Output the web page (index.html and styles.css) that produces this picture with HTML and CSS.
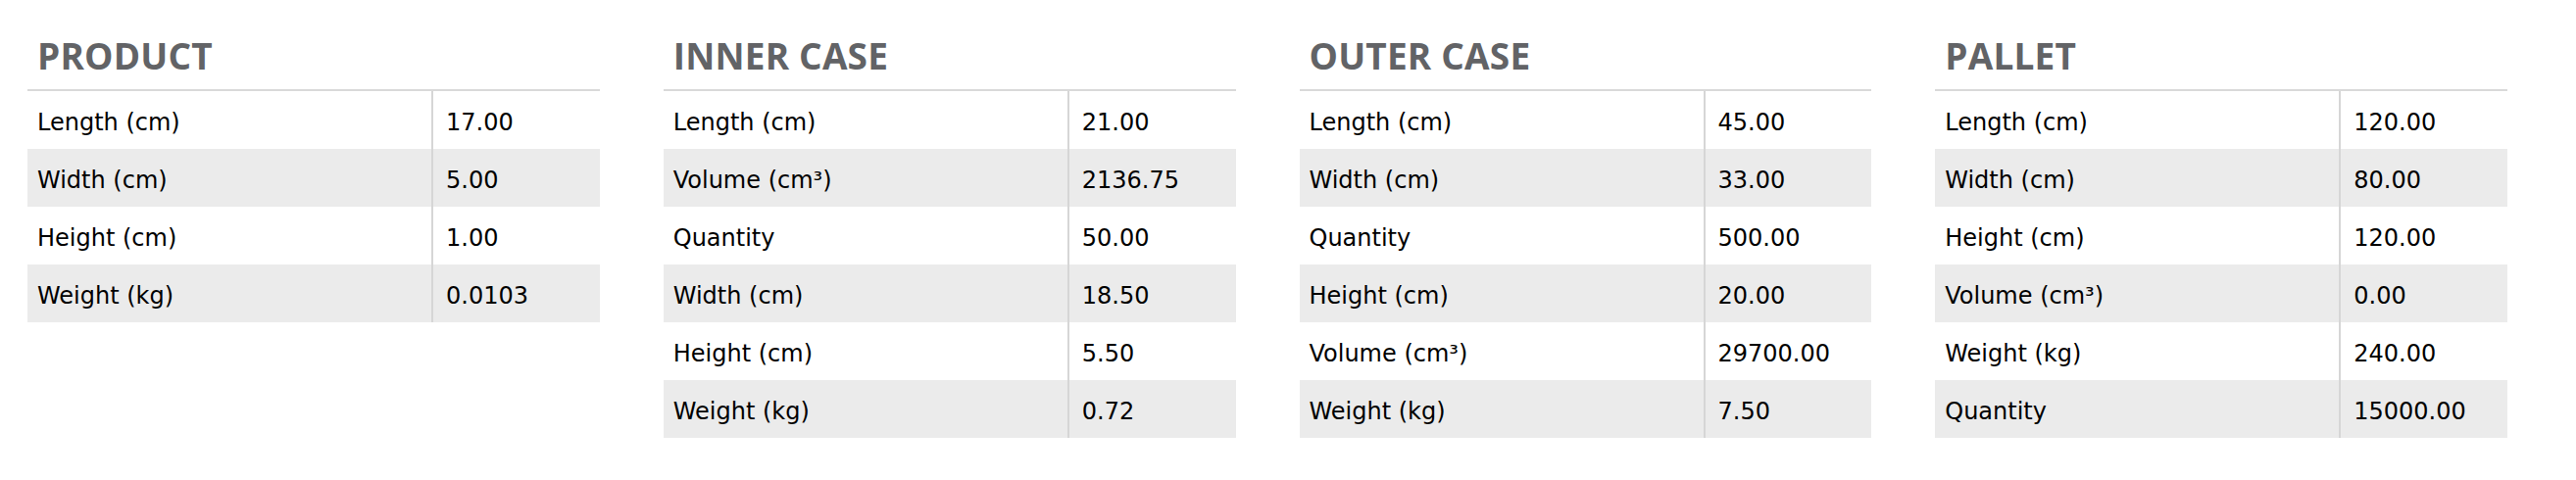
FILE: index.html
```html
<!DOCTYPE html>
<html lang="en">
<head>
<meta charset="utf-8">
<title>Packaging dimensions</title>
<link rel="stylesheet" href="styles.css">
</head>
<body>
<div class="specs">
  <section class="block">
    <h2 class="block-title">PRODUCT</h2>
    <table class="spec-table">
      <tr><td class="label">Length (cm)</td><td class="value">17.00</td></tr>
      <tr><td class="label">Width (cm)</td><td class="value">5.00</td></tr>
      <tr><td class="label">Height (cm)</td><td class="value">1.00</td></tr>
      <tr><td class="label">Weight (kg)</td><td class="value">0.0103</td></tr>
    </table>
  </section>
  <section class="block">
    <h2 class="block-title">INNER CASE</h2>
    <table class="spec-table">
      <tr><td class="label">Length (cm)</td><td class="value">21.00</td></tr>
      <tr><td class="label">Volume (cm³)</td><td class="value">2136.75</td></tr>
      <tr><td class="label">Quantity</td><td class="value">50.00</td></tr>
      <tr><td class="label">Width (cm)</td><td class="value">18.50</td></tr>
      <tr><td class="label">Height (cm)</td><td class="value">5.50</td></tr>
      <tr><td class="label">Weight (kg)</td><td class="value">0.72</td></tr>
    </table>
  </section>
  <section class="block">
    <h2 class="block-title">OUTER CASE</h2>
    <table class="spec-table">
      <tr><td class="label">Length (cm)</td><td class="value">45.00</td></tr>
      <tr><td class="label">Width (cm)</td><td class="value">33.00</td></tr>
      <tr><td class="label">Quantity</td><td class="value">500.00</td></tr>
      <tr><td class="label">Height (cm)</td><td class="value">20.00</td></tr>
      <tr><td class="label">Volume (cm³)</td><td class="value">29700.00</td></tr>
      <tr><td class="label">Weight (kg)</td><td class="value">7.50</td></tr>
    </table>
  </section>
  <section class="block">
    <h2 class="block-title">PALLET</h2>
    <table class="spec-table">
      <tr><td class="label">Length (cm)</td><td class="value">120.00</td></tr>
      <tr><td class="label">Width (cm)</td><td class="value">80.00</td></tr>
      <tr><td class="label">Height (cm)</td><td class="value">120.00</td></tr>
      <tr><td class="label">Volume (cm³)</td><td class="value">0.00</td></tr>
      <tr><td class="label">Weight (kg)</td><td class="value">240.00</td></tr>
      <tr><td class="label">Quantity</td><td class="value">15000.00</td></tr>
    </table>
  </section>
</div>
</body>
</html>
```

FILE: styles.css
```css
html, body {
  margin: 0;
  padding: 0;
  background: #ffffff;
}

.specs {
  display: grid;
  grid-template-columns: repeat(4, 1fr);
  column-gap: 65px;
  padding: 32px 70px 0 28px;
  align-items: start;
}

.block {
  display: flex;
  flex-direction: column;
}

.block-title {
  margin: 0 0 9px 0;
  padding-left: 10px;
  font-family: "Open Sans", "Liberation Sans", sans-serif;
  font-weight: 700;
  font-size: 37px;
  line-height: 50px;
  color: #626366;
  letter-spacing: 0.2px;
}

.spec-table {
  width: 100%;
  border-collapse: separate;
  border-spacing: 0;
  border-top: 2px solid #d9d9d9;
  font-family: "DejaVu Sans", Verdana, sans-serif;
  font-size: 24px;
  color: #000000;
}

.spec-table tr:nth-child(even) td {
  background: #ebebeb;
}

.spec-table td {
  height: 55px;
  padding: 4px 0 0 0;
  vertical-align: middle;
  white-space: nowrap;
}

.label {
  width: 414px;
  box-sizing: border-box;
  padding-left: 10px !important;
  border-right: 2px solid #d6d6d6;
}

.value {
  padding-left: 13px !important;
}
```
